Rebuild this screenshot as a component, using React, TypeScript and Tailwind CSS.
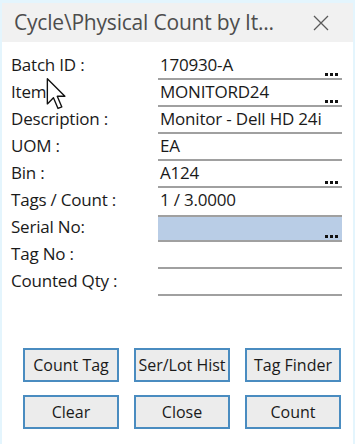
import React from "react";

const rows: { label: string; value?: string; dots?: boolean; line: boolean; hl?: boolean }[] = [
  { label: "Batch ID :", value: "170930-A", dots: true, line: true },
  { label: "Item :", value: "MONITORD24", dots: true, line: true },
  { label: "Description :", value: "Monitor - Dell HD 24i", line: true },
  { label: "UOM :", value: "EA", line: true },
  { label: "Bin :", value: "A124", dots: true, line: true },
  { label: "Tags / Count :", value: "1 / 3.0000", line: false },
  { label: "Serial No:", dots: true, line: true, hl: true },
  { label: "Tag No :", line: true },
  { label: "Counted Qty :", line: true },
];

function Btn({ children }: { children: React.ReactNode }) {
  return (
    <div className="w-[96px] h-[34px] border-2 border-[#4a8cc0] bg-[#ececec] flex items-center justify-center text-[16px] text-[#1a1a1a]">
      {children}
    </div>
  );
}

export default function App() {
  return (
    <div
      className="relative w-[355px] h-[444px] bg-[#e4f5fd] pt-[3px] px-[2px] overflow-hidden"
      style={{ fontFamily: '"Open Sans", "Noto Sans", sans-serif' }}
    >
      <div className="h-[39px] bg-[#f1f1f1] flex items-center justify-between pl-[12px] pr-[24px]">
        <span className="text-[21px] text-[#4d4d4d] tracking-[-0.2px]">{"Cycle\\Physical Count by It..."}</span>
        <svg width="16" height="16" viewBox="0 0 16 16">
          <path d="M1 1 L15 15 M15 1 L1 15" stroke="#5a5a5a" strokeWidth="1.3" fill="none" />
        </svg>
      </div>
      <div className="bg-white h-[402px] pt-[11px] pl-[9px] pr-[11px]">
        {rows.map((r) => (
          <div key={r.label} className="flex h-[27px]">
            <div className="w-[147px] text-[17px] text-[#1a1a1a] leading-[24px] tracking-[-0.2px] whitespace-nowrap">{r.label}</div>
            <div
              className={
                "relative flex-1 pl-[2px] " +
                (r.line ? "border-b-2 border-[#a0a0a0] " : "") +
                (r.hl ? "border-t-2 bg-[#b9cde6] " : "")
              }
            >
              <span className="text-[17px] text-[#1a1a1a] leading-[24px] tracking-[-0.2px] whitespace-nowrap">{r.value}</span>
              {r.dots && (
                <span className="absolute right-[4px] bottom-[2px] flex gap-[2px]">
                  <span className="w-[3px] h-[3px] bg-[#111]" />
                  <span className="w-[3px] h-[3px] bg-[#111]" />
                  <span className="w-[3px] h-[3px] bg-[#111]" />
                </span>
              )}
            </div>
          </div>
        ))}
        <div className="mt-[52px] pl-[12px] grid grid-cols-[96px_96px_96px] gap-x-[15px] gap-y-[13px]">
          <Btn>Count Tag</Btn>
          <Btn>Ser/Lot Hist</Btn>
          <Btn>Tag Finder</Btn>
          <Btn>Clear</Btn>
          <Btn>Close</Btn>
          <Btn>Count</Btn>
        </div>
      </div>
      <svg className="absolute left-[46px] top-[78px]" width="21" height="32" viewBox="0 0 13 21">
        <path
          d="M0.5 0.5 L0.5 17 L4.5 13 L7.5 20 L10 19 L7 12 L12 12 Z"
          fill="white"
          stroke="#111"
          strokeWidth="0.9"
          strokeLinejoin="round"
        />
      </svg>
    </div>
  );
}
